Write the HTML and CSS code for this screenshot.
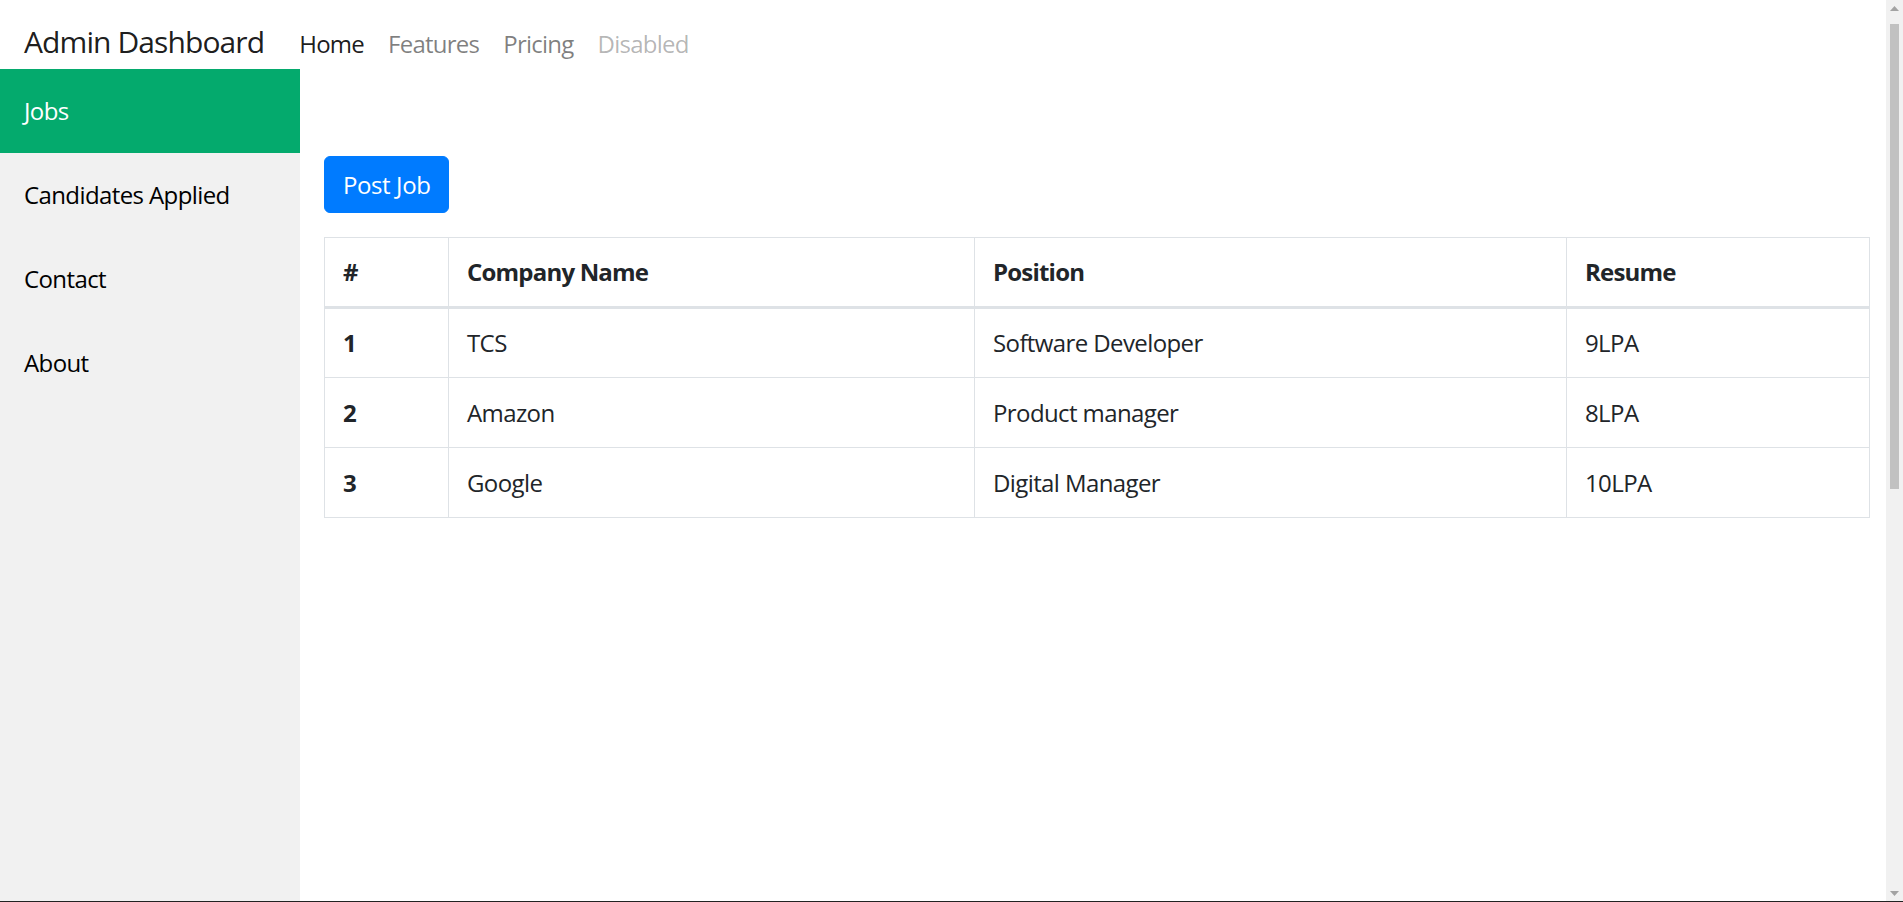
FILE: index.html
```html
<!DOCTYPE html>
<html lang="en">
<head>
<meta charset="utf-8">
<title>Admin Dashboard</title>
<link rel="stylesheet" href="styles.css">
</head>
<body>
  <div class="page">
    <nav class="navbar">
      <a class="brand" href="#">Admin Dashboard</a>
      <ul class="nav">
        <li><a class="nav-link active" href="#">Home</a></li>
        <li><a class="nav-link" href="#">Features</a></li>
        <li><a class="nav-link" href="#">Pricing</a></li>
        <li><a class="nav-link disabled" href="#">Disabled</a></li>
      </ul>
    </nav>
    <div class="layout">
      <aside class="sidebar">
        <a class="side-link current" href="#">Jobs</a>
        <a class="side-link" href="#">Candidates Applied</a>
        <a class="side-link" href="#">Contact</a>
        <a class="side-link" href="#">About</a>
      </aside>
      <main class="content">
        <button class="btn-primary" type="button">Post Job</button>
        <table class="table">
          <thead>
            <tr>
              <th class="c1">#</th>
              <th class="c2">Company Name</th>
              <th class="c3">Position</th>
              <th class="c4">Resume</th>
            </tr>
          </thead>
          <tbody>
            <tr><th>1</th><td>TCS</td><td>Software Developer</td><td>9LPA</td></tr>
            <tr><th>2</th><td>Amazon</td><td>Product manager</td><td>8LPA</td></tr>
            <tr><th>3</th><td>Google</td><td>Digital Manager</td><td>10LPA</td></tr>
          </tbody>
        </table>
      </main>
    </div>
  </div>
  <div class="scrollbar" aria-hidden="true">
    <svg class="arrow" width="9" height="5" viewBox="0 0 9 5"><path d="M0 5 L4.5 0 L9 5 Z" fill="#a3a3a3"/></svg>
    <div class="thumb"></div>
    <div class="track-rest"></div>
    <svg class="arrow" width="9" height="5" viewBox="0 0 9 5"><path d="M0 0 L4.5 5 L9 0 Z" fill="#a3a3a3"/></svg>
  </div>
</body>
</html>
```

FILE: styles.css
```css
* { box-sizing: border-box; }

html, body {
  margin: 0;
  padding: 0;
}

body {
  height: 100vh;
  overflow: hidden;
  display: flex;
  border-bottom: 1px solid #222;
  font-family: "Open Sans", "Noto Sans", "Liberation Sans", sans-serif;
  font-size: 24px;
  line-height: 36px;
  letter-spacing: -0.6px;
  color: #212529;
  background: #fff;
}

a { text-decoration: none; }

.page {
  flex: 1;
  min-width: 0;
  display: flex;
  flex-direction: column;
}

.navbar {
  height: 69px;
  flex: 0 0 69px;
  padding: 19px 24px 0;
  display: flex;
  align-items: baseline;
}

.brand {
  font-size: 30px;
  line-height: 45px;
  letter-spacing: -0.9px;
  color: rgba(0, 0, 0, 0.9);
  margin-right: 23px;
}

.nav {
  list-style: none;
  margin: 0;
  padding: 0;
  display: flex;
}

.nav-link {
  display: block;
  padding: 0 12px;
  font-size: 24px;
  line-height: 36px;
  letter-spacing: -0.75px;
  color: rgba(0, 0, 0, 0.5);
}

.nav-link.active { color: rgba(0, 0, 0, 0.9); }
.nav-link.disabled { color: rgba(0, 0, 0, 0.3); }

.layout {
  flex: 1;
  display: flex;
}

.sidebar {
  width: 300px;
  flex: 0 0 300px;
  background: #f1f1f1;
  display: flex;
  flex-direction: column;
}

.side-link {
  display: block;
  padding: 24px;
  line-height: 36px;
  color: #000;
}

.side-link.current {
  background: #04aa6d;
  color: #fff;
}

.content {
  flex: 1;
  padding: 87px 16px 0 24px;
}

.btn-primary {
  font-family: inherit;
  font-size: 24px;
  line-height: 36px;
  letter-spacing: -0.4px;
  padding: 10px 18px 9px;
  color: #fff;
  background: #007bff;
  border: 1px solid #007bff;
  border-radius: 6px;
  display: block;
  margin-bottom: 24px;
}

.table {
  width: 100%;
  border-collapse: collapse;
  border: 1px solid #dee2e6;
  color: #212529;
}

.table th,
.table td {
  padding: 16px 18px;
  line-height: 36px;
  text-align: left;
  vertical-align: top;
  border: 1px solid #dee2e6;
  font-size: 24px;
}

.table tbody th,
.table tbody td { padding-top: 17px; padding-bottom: 16px; }

.table tbody tr:first-child th,
.table tbody tr:first-child td { padding-top: 16px; }

.table th {
  font-weight: 700;
  letter-spacing: -0.8px;
}

.table thead th { border-bottom: 3px solid #dee2e6; }

.c1 { width: 124px; }
.c2 { width: 526px; }
.c3 { width: 592px; }
.c4 { width: 303px; }

.scrollbar {
  width: 17px;
  flex: 0 0 17px;
  background: #f1f1f1;
  display: flex;
  flex-direction: column;
  align-items: center;
  padding: 6px 0 5px;
}

.arrow { flex: 0 0 auto; }

.thumb {
  width: 9px;
  height: 465px;
  margin-top: 13px;
  background: #c1c1c1;
}

.track-rest { flex: 1; }
```
